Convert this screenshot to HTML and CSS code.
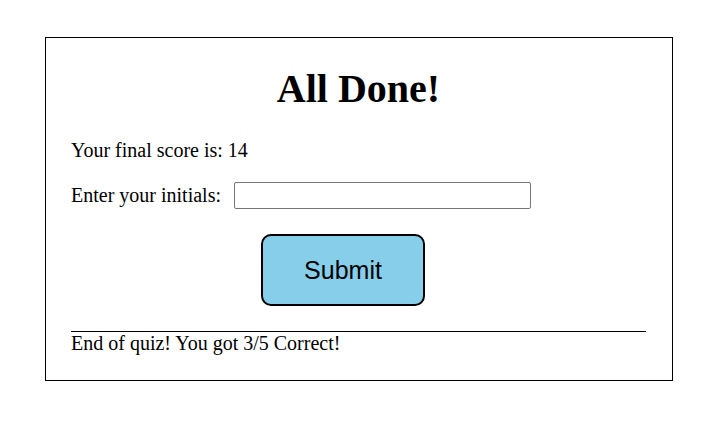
FILE: index.html
```html
<!DOCTYPE html>
<html lang="en">
<head>
<meta charset="utf-8">
<title>All Done</title>
<link rel="stylesheet" href="styles.css">
</head>
<body>
  <main class="quiz-box">
    <h1 class="title">All Done!</h1>
    <p class="score">Your final score is: <span class="score-value">14</span></p>
    <form class="initials-form" onsubmit="return false;">
      <div class="initials-row">
        <label class="initials-label" for="initials">Enter your initials:</label>
        <input class="initials-input" id="initials" type="text">
      </div>
      <button class="submit-btn" type="submit">Submit</button>
    </form>
    <div class="result">End of quiz! You got 3/5 Correct!</div>
  </main>
</body>
</html>
```

FILE: styles.css
```css
html, body {
  margin: 0;
  padding: 0;
  background: #ffffff;
}

body {
  font-family: "Liberation Serif", "Times New Roman", serif;
  font-size: 20px;
  color: #000000;
}

.quiz-box {
  box-sizing: border-box;
  width: 628px;
  margin: 37px 0 0 45px;
  padding: 25px 26px 25px 25px;
  border: 1px solid #000000;
}

.title {
  margin: 2px 0 27px;
  font-size: 40px;
  font-weight: bold;
  line-height: normal;
  text-align: center;
}

.score {
  margin: 0;
  line-height: 23px;
}

.initials-form {
  margin: 20px 0 0;
}

.initials-row {
  display: flex;
  align-items: center;
  gap: 13px;
  height: 27px;
}

.initials-label {
  line-height: 23px;
  width: 150px;
}

.initials-input {
  box-sizing: border-box;
  width: 297px;
  height: 27px;
  margin: 0;
  padding: 1px 2px;
  border: 1px solid #767676;
  border-radius: 2px;
  font-family: "Liberation Sans", Arial, sans-serif;
  font-size: 13px;
}

.submit-btn {
  display: block;
  box-sizing: border-box;
  width: 164px;
  height: 72px;
  margin: 25px 0 25px 190px;
  padding: 0;
  border: 2px solid #000000;
  border-radius: 10px;
  background: #87ceeb;
  color: #000000;
  font-family: "Liberation Sans", Arial, sans-serif;
  font-size: 25px;
  cursor: pointer;
}

.result {
  border-top: 1px solid #000000;
  line-height: 23px;
}
```
